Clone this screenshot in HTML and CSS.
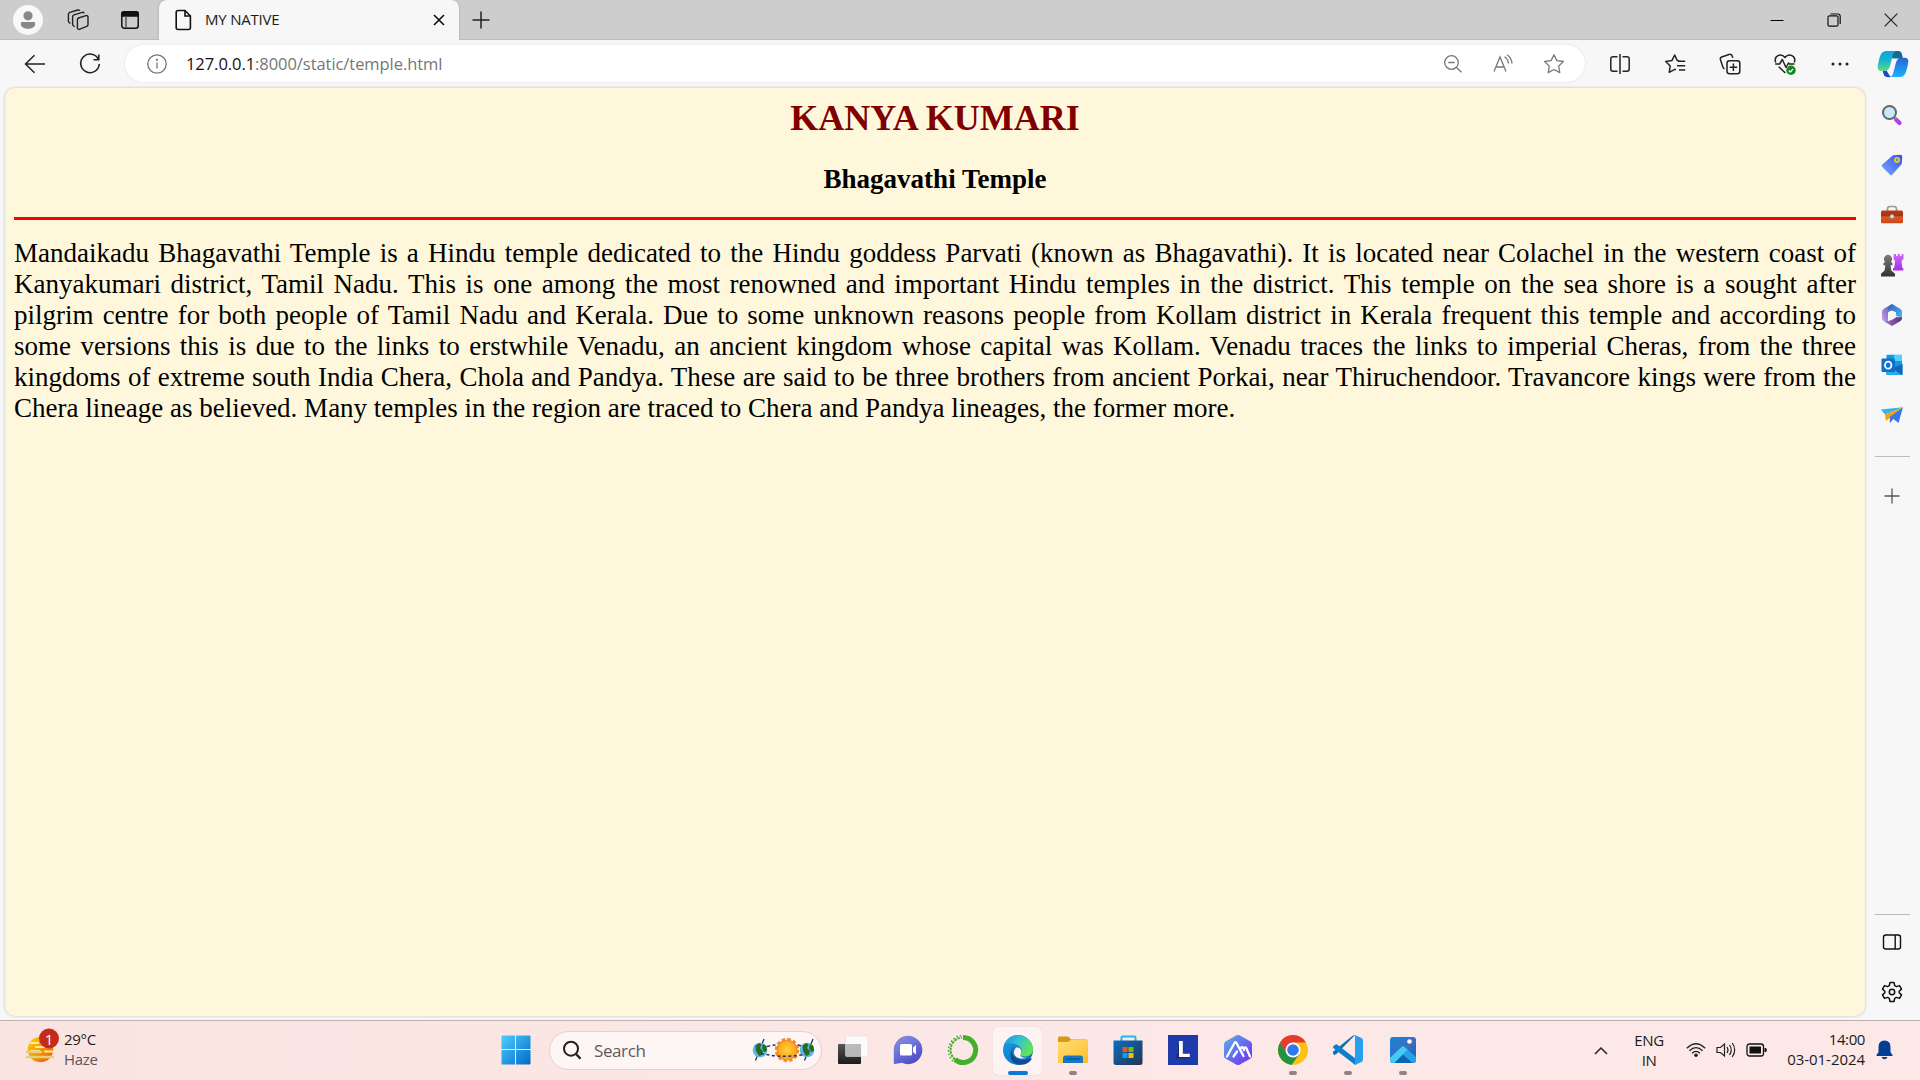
FILE: index.html
```html
<!DOCTYPE html>
<html lang="en">
<head>
<meta charset="utf-8">
<title>MY NATIVE</title>
<link rel="stylesheet" href="styles.css">
</head>
<body>
<svg class="defs" width="0" height="0">
  <defs>
    <linearGradient id="teal" x1="0" y1="0" x2="0" y2="1"><stop offset="0" stop-color="#0ea5e0"/><stop offset=".45" stop-color="#14b3d0"/><stop offset="1" stop-color="#5bdc86"/></linearGradient>
    <linearGradient id="blue" x1="0" y1="0" x2="0" y2="1"><stop offset="0" stop-color="#2a62d8"/><stop offset="1" stop-color="#19b4fb"/></linearGradient>
    <linearGradient id="tag" x1="0" y1="1" x2="1" y2="0"><stop offset="0" stop-color="#74aefc"/><stop offset="1" stop-color="#3c4df0"/></linearGradient>
    <linearGradient id="win" gradientUnits="userSpaceOnUse" x1="0" y1="0" x2="30" y2="30"><stop offset="0" stop-color="#4fd0ff"/><stop offset="1" stop-color="#0067c8"/></linearGradient>
    <linearGradient id="sun" x1="0" y1="0" x2="1" y2="1"><stop offset="0" stop-color="#ffd400"/><stop offset="1" stop-color="#e65a0c"/></linearGradient>
    <linearGradient id="dark" x1="0" y1="0" x2="0" y2="1"><stop offset="0" stop-color="#555"/><stop offset="1" stop-color="#1c1c1c"/></linearGradient>
    <linearGradient id="pawn" x1="0" y1="0" x2="0" y2="1"><stop offset="0" stop-color="#7c7c7c"/><stop offset="1" stop-color="#333"/></linearGradient>
    <linearGradient id="chat" x1="0" y1="0" x2=".6" y2="1"><stop offset="0" stop-color="#9a86cc"/><stop offset=".35" stop-color="#7480dc"/><stop offset="1" stop-color="#4f4cc4"/></linearGradient>
    <linearGradient id="edgeTop" x1="0" y1="0" x2="1" y2=".5"><stop offset="0" stop-color="#1593d8"/><stop offset=".5" stop-color="#34c1d6"/><stop offset="1" stop-color="#62e552"/></linearGradient>
    <linearGradient id="edgeLeft" x1="0" y1="0" x2="1" y2="1"><stop offset="0" stop-color="#1aa0e4"/><stop offset="1" stop-color="#0c64c0"/></linearGradient>
    <linearGradient id="folder" x1="0" y1="0" x2="1" y2="1"><stop offset="0" stop-color="#ffdf7a"/><stop offset="1" stop-color="#fdbd25"/></linearGradient>
    <linearGradient id="store" x1="0" y1="0" x2="1" y2="1"><stop offset="0" stop-color="#0a6fc0"/><stop offset="1" stop-color="#243455"/></linearGradient>
    <linearGradient id="hex" x1="0" y1="0" x2="1" y2="1"><stop offset="0" stop-color="#59b2ea"/><stop offset="1" stop-color="#7227f2"/></linearGradient>
    <linearGradient id="photo" x1="0" y1="0" x2="1" y2="1"><stop offset="0" stop-color="#1685d8"/><stop offset=".55" stop-color="#3f6cc0"/><stop offset="1" stop-color="#0c62b4"/></linearGradient>
    <linearGradient id="rook" x1="0" y1="0" x2="0" y2="1"><stop offset="0" stop-color="#cf6cf2"/><stop offset="1" stop-color="#a32bf0"/></linearGradient>
    <linearGradient id="brick" x1="0" y1="0" x2="0" y2="1"><stop offset="0" stop-color="#b63c14"/><stop offset=".4" stop-color="#a6330f"/><stop offset=".5" stop-color="#e2592a"/><stop offset="1" stop-color="#c94415"/></linearGradient>
    <linearGradient id="loopA" x1="0" y1="1" x2="1" y2="0"><stop offset="0" stop-color="#d0a0ec"/><stop offset="1" stop-color="#4c50b0"/></linearGradient>
    <linearGradient id="loopB" x1="0" y1="0" x2="1" y2="1"><stop offset="0" stop-color="#2c60bd"/><stop offset="1" stop-color="#4fbdf2"/></linearGradient>
    <linearGradient id="loopC" x1="0" y1="0" x2="1" y2="0"><stop offset="0" stop-color="#a678d4"/><stop offset="1" stop-color="#583070"/></linearGradient>
    <radialGradient id="disc"><stop offset="0" stop-color="#ffd13c"/><stop offset="1" stop-color="#f9a81c"/></radialGradient>
  </defs>
</svg>

<header class="tabs">
  <div class="slot profile"><svg width="30" height="30" viewBox="0 0 30 30"><circle cx="15" cy="15" r="15" fill="#f8f8f8"/><circle cx="15" cy="10.800" r="4.600" fill="#888"/><path d="M8 17h14v2.500c0 2.600-3 4.200-7 4.200s-7-1.600-7-4.200z" fill="#888"/></svg></div>
  <div class="slot spaces"><svg width="22" height="22" viewBox="0 0 22 22" fill="none" stroke="#222" stroke-width="1.400"><path d="M11.500 9l7.500-2.400c1.200-.3 2 .4 2 1.500v7.300c0 1-.5 1.700-1.300 2l-7.400 2.900c-1.100.3-1.900-.4-1.900-1.500v-7.600c0-1 .3-1.800 1.100-2.200z"/><path d="M7.700 17.700l-1.200-.9c-.6-.4-.9-.9-.9-1.700V7.800c0-1 .5-1.600 1.400-1.900l8.200-2.500c.8-.2 1.600 0 1.900.9"/><path d="M3.400 14.500l-1.200-1c-.6-.4-.8-.9-.8-1.600V5.200c0-.9.5-1.600 1.400-1.900L10.700 1c.9-.2 1.700.1 2 .8"/></svg></div>
  <div class="slot actions"><svg width="20" height="20" viewBox="0 0 20 20" fill="none" stroke="#111" stroke-width="1.500"><rect x="1.800" y="1.800" width="16.400" height="16.400" rx="2.500"/><path d="M1.800 6V4q0-2.200 2.200-2.200h12q2.200 0 2.200 2.200v2z" fill="#111"/><path d="M6 6v12" stroke="#555"/></svg></div>
  <div class="tab">
    <svg class="doc" width="17" height="22" viewBox="0 0 17 22" fill="none" stroke="#111" stroke-width="1.600"><path d="M3.200 1.500H10L15.400 7v11.500q0 2-2 2H3.200q-2 0-2-2v-15q0-2 2-2z"/><path d="M10 1.500V7h5.400"/></svg>
    <span class="tab-title">MY NATIVE</span>
    <svg class="tab-close" width="12" height="12" viewBox="0 0 12 12" stroke="#111" stroke-width="1.600"><path d="M1 1l10 10M11 1L1 11"/></svg>
  </div>
  <svg class="new-tab" width="18" height="18" viewBox="0 0 18 18" stroke="#222" stroke-width="1.500"><path d="M9 .5v17M.5 9h17"/></svg>
  <div class="controls">
    <svg width="14" height="14" viewBox="0 0 14 14" stroke="#000"><path d="M.5 7.500h13"/></svg>
    <svg width="14" height="14" viewBox="0 0 14 14" fill="none" stroke="#111" stroke-width="1.200"><rect x="1" y="2.800" width="10" height="10.400" rx="1.500"/><path d="M3.500 1h7.300q2.400 0 2.400 2.400V11"/></svg>
    <svg width="14" height="14" viewBox="0 0 14 14" stroke="#222" stroke-width="1.200"><path d="M.7.7l12.600 12.600M13.300.7L.7 13.300"/></svg>
  </div>
</header>

<nav class="toolbar">
  <div class="nav-btn"><svg width="22" height="20" viewBox="0 0 22 20" fill="none" stroke="#222" stroke-width="1.500"><path d="M21 10H1.500M10.500 1.300L1.500 10l9 8.700"/></svg></div>
  <div class="nav-btn"><svg width="22" height="22" viewBox="0 0 22 22" fill="none" stroke="#222" stroke-width="1.600"><path d="M19.500 6.500A9.300 9.300 0 1 0 20.300 11"/><path d="M19.800 1.500v5.200h-5.300"/></svg></div>
  <div class="address">
    <svg class="info" width="20" height="20" viewBox="0 0 20 20" fill="none" stroke="#777" stroke-width="1.300"><circle cx="10" cy="10" r="9.200"/><path d="M10 8.600v6"/><circle cx="10" cy="5.800" r=".5"/></svg>
    <span class="url"><b>127.0.0.1</b>:8000/static/temple.html</span>
    <div class="address-tools">
      <svg width="20" height="20" viewBox="0 0 20 20" fill="none" stroke="#777" stroke-width="1.300"><circle cx="8.500" cy="8.500" r="6.800"/><path d="M5.300 8.500h6.400M13.500 13.500l5 4.800"/></svg>
      <svg width="20" height="20" viewBox="0 0 20 20" fill="none" stroke="#777" stroke-width="1.300"><path d="M1 17.500L7 3l6 14.500M3 13h8M11.500 2.800q3.500 2.200 4 6.700M14 .8q4.500 3 5 8.700"/></svg>
      <svg width="22" height="22" viewBox="0 0 22 22" fill="none" stroke="#777" stroke-width="1.300" stroke-linejoin="round"><path d="M11 1.700l2.900 5.900 6.500.9-4.700 4.600 1.100 6.500L11 16.500l-5.800 3.100 1.100-6.500L1.600 8.500l6.500-.9z"/></svg>
    </div>
  </div>
  <div class="tools">
    <svg width="22" height="22" viewBox="0 0 22 22" fill="none" stroke="#222" stroke-width="1.500"><path d="M8.500 3.700H4q-2.200 0-2.200 2.200v10.200q0 2.200 2.200 2.200h4.500M13.500 3.700H18q2.200 0 2.200 2.200v10.200q0 2.200-2.200 2.200h-4.500M11 1v20"/></svg>
    <svg width="22" height="22" viewBox="0 0 22 22" fill="none" stroke="#222" stroke-width="1.500" stroke-linejoin="round"><path d="M15 7.800l-1.700-.2L10.700 2 7.900 7.600l-6.200.9 4.500 4.500-1 6.300 5.600-3 1.100.5M14 8.300h7.200M13 12.700h8.200M15 17h6.200"/></svg>
    <svg width="22" height="22" viewBox="0 0 22 22" fill="none" stroke="#222" stroke-width="1.500"><rect x="8" y="7.700" width="12.800" height="13" rx="2.500"/><path d="M14.400 10.500v7.500M10.700 14.200h7.500M5.500 15.800q-1.200-.4-1.600-1.700L1.400 6.500Q.9 4.600 2.700 4L10 1.500q2.300-.6 3.200 1.400l.6 1.800"/></svg>
    <svg width="22" height="22" viewBox="0 0 22 22" fill="none" stroke="#222" stroke-width="1.500" stroke-linejoin="round"><path d="M1.700 9.500Q0 4.800 4 2.600q4-1.600 7 1.800 3-3.400 7-1.800 4 2.200 2.300 6.900M1.200 11h4.500l2.600-4.500 3.700 8 2.500-4.500 1 1h5M4.800 13.800l6.500 6.200"/><circle cx="17" cy="17.300" r="4.700" fill="#118a18" stroke="none"/><path d="M14.800 17.500l1.500 1.500 2.800-3" stroke="#fff" stroke-width="1.200"/></svg>
    <svg width="22" height="22" viewBox="0 0 22 22" fill="#222"><circle cx="4" cy="11" r="1.500"/><circle cx="11" cy="11" r="1.500"/><circle cx="18" cy="11" r="1.500"/></svg>
  </div>
  <div class="copilot"><svg width="32" height="28" viewBox="0 0 32 28"><path d="M15 1h6.500q2.600 0 3.400 3l1.100 4.500h-9L14 8z" fill="#136b92"/><path d="M9.500 20.500L13.500 27q-5.500 1-7-3L5.500 20z" fill="#1f46d2"/><path d="M9 1h10.300q-2.600.7-3.300 3.300L13 16q-1.400 5-5.500 5H4.200Q.6 21 .7 16.800q.3-3.200 2-9.500Q4.500 1 9 1z" fill="url(#teal)"/><path d="M23 27H12.700q2.600-.7 3.300-3.300L19 12.500q1.400-4.800 5.500-4.800h3.300q3.600 0 3.500 4-.3 3.200-2 9.200Q27.500 27 23 27z" fill="url(#blue)"/></svg></div>
</nav>

<div class="middle">
  <main class="page">
    <h1>KANYA KUMARI</h1>
    <h2>Bhagavathi Temple</h2>
    <hr>
    <p>Mandaikadu Bhagavathi Temple is a Hindu temple dedicated to the Hindu goddess Parvati (known as Bhagavathi). It is located near Colachel in the western coast of Kanyakumari district, Tamil Nadu. This is one among the most renowned and important Hindu temples in the district. This temple on the sea shore is a sought after pilgrim centre for both people of Tamil Nadu and Kerala. Due to some unknown reasons people from Kollam district in Kerala frequent this temple and according to some versions this is due to the links to erstwhile Venadu, an ancient kingdom whose capital was Kollam. Venadu traces the links to imperial Cheras, from the three kingdoms of extreme south India Chera, Chola and Pandya. These are said to be three brothers from ancient Porkai, near Thiruchendoor. Travancore kings were from the Chera lineage as believed. Many temples in the region are traced to Chera and Pandya lineages, the former more.</p>
  </main>
  <aside class="sidebar">
    <div class="side-btn"><svg width="22" height="22" viewBox="0 0 22 22"><path d="M15 15.500l3.500 3.500" stroke="#b53cf0" stroke-width="4.200" stroke-linecap="round"/><path d="M12.500 12.500l3 3" stroke="#888" stroke-width="2"/><circle cx="8.500" cy="8.500" r="6.500" fill="#c8e8fb" stroke="#666" stroke-width="2"/></svg></div>
    <div class="side-btn"><svg width="22" height="22" viewBox="0 0 22 22"><path d="M12 1.200l7.300-.4q2 0 2 2l-.5 7.200-9.600 10.700q-1 1-2.200 0L1.300 13q-1.300-1.200 0-2.500z" fill="url(#tag)"/><circle cx="16" cy="6" r="2.200" fill="#8f8" fill-opacity=".3" stroke="#f6c829" stroke-width="1.600"/></svg></div>
    <div class="side-btn"><svg width="24" height="20" viewBox="0 0 24 20"><path d="M7.500 6V4q0-2.500 2.500-2.500h4q2.500 0 2.500 2.500v2" fill="none" stroke="#999" stroke-width="1.700"/><rect x="1" y="5.500" width="22" height="12.800" rx="1.500" fill="url(#brick)"/><circle cx="12" cy="11.500" r="2.200" fill="#ddd" stroke="#777" stroke-width=".7"/></svg></div>
    <div class="side-btn"><svg width="24" height="24" viewBox="0 0 24 24"><path d="M13.800 1h2.200v2h1.700V1h2.300v2h1.500V1h2v5l-2 2 .8 7h1v2.500H13V15h1.200l.9-7-1.600-2z" fill="url(#rook)"/><path d="M8 1.800a4.200 4.200 0 0 1 3 7l1.500 1.700v1.800h-2l.8 5.200 3.700 3.200v2.800H1v-2.800l3.600-3.200.8-5.200h-2v-1.800L5 8.800a4.200 4.200 0 0 1 3-7z" fill="url(#pawn)"/></svg></div>
    <div class="side-btn"><svg width="24" height="24" viewBox="0 0 24 24"><path d="M12 1l-8.500 5Q2 7 2 9v6q0 2 1.500 3L8 20.300V9.500L13.500 6z" fill="url(#loopA)"/><path d="M12 1l8.500 5Q22 7 22 9v6.500l-6-3V9.300L8 6.500V4z" fill="url(#loopB)"/><path d="M22 14.500v.5q0 2-1.500 3L12 23l-8-4.700q4 .7 8-1.800l4-2.500z" fill="url(#loopC)"/><path d="M12 7.500l4 2.300v4.500L12 16.700l-4-2.400V9.800z" fill="#f7f7f7"/></svg></div>
    <div class="side-btn"><svg width="22" height="22" viewBox="0 0 22 22"><rect x="5.500" y=".8" width="15.500" height="13" rx="1" fill="#1597dd"/><path d="M13 1h8v6h-8z" fill="#4bd3fb"/><path d="M5 10l8 5 8.500-5v10q0 1-1 1H6q-1 0-1-1z" fill="#2aa9ec"/><path d="M21.500 10v10q0 1-1 1L11 14z" fill="#1367b6"/><rect x=".5" y="4.500" width="13.500" height="13.500" rx="1" fill="#0b72cc"/><ellipse cx="7.200" cy="11.200" rx="3.200" ry="3.500" fill="none" stroke="#fff" stroke-width="1.800"/></svg></div>
    <div class="side-btn"><svg width="24" height="20" viewBox="0 0 24 20"><path d="M.8 4.500L23 2.200 5 9.500z" fill="#31b4ee"/><path d="M23 2.200L5 9.500l1 6.500 5-4.200z" fill="#f0a014"/><path d="M23 2.200L9.800 12v6.300l3.500-4.200 5.200 3.800z" fill="#3478ea"/></svg></div>
    <div class="divider"></div>
    <div class="side-btn add"><svg width="16" height="16" viewBox="0 0 16 16" stroke="#555" stroke-width="1.300"><path d="M8 .5v15M.5 8h15"/></svg></div>
    <div class="divider lower"></div>
    <div class="side-btn panel"><svg width="20" height="18" viewBox="0 0 20 18" fill="none" stroke="#111" stroke-width="1.400"><rect x="1.500" y="2" width="17" height="14" rx="2.200"/><path d="M13.200 2v14"/></svg></div>
    <div class="side-btn"><svg width="22" height="22" viewBox="0 0 22 22" fill="none" stroke="#111" stroke-width="1.500" stroke-linejoin="round"><circle cx="11" cy="11" r="2.700"/><path d="M9 1.500h4l.7 3.100 1.800 1 3-1 2 3.500-2.300 2.100v1.600l2.300 2.100-2 3.500-3-1-1.800 1-.7 3.100H9l-.7-3.100-1.800-1-3 1-2-3.500 2.300-2.100v-1.600L1.500 8.100l2-3.500 3 1 1.800-1z"/></svg></div>
  </aside>
</div>

<footer class="taskbar">
  <div class="widgets">
    <svg width="36" height="36" viewBox="0 0 36 36"><circle cx="15.500" cy="21.500" r="12.700" fill="url(#sun)"/><path d="M6 15h7M11 19h16M6 23h8M20 23.500h9" stroke="#ffe9a0" stroke-width="2" stroke-linecap="round"/><path d="M2 24h14M2 29h26" stroke="#e8cc80" stroke-width="2.400" stroke-linecap="round"/><circle cx="24" cy="10.500" r="10" fill="#c42b1c"/></svg>
    <span class="badge">1</span>
    <div class="weather"><span>29°C</span><span class="muted">Haze</span></div>
  </div>
  <div class="app start"><svg width="30" height="30" viewBox="0 0 30 30" fill="url(#win)"><path d="M1.500.5H14V14H.5V1.500q0-1 1-1zM15 .5h13.500q1 0 1 1V14H15zM.5 15H14v14.500H1.500q-1 0-1-1zM15 15h14.500v13.500q0 1-1 1H15z"/></svg></div>
  <div class="search">
    <svg width="20" height="20" viewBox="0 0 20 20" fill="none" stroke="#222" stroke-width="2"><circle cx="9" cy="8.700" r="7"/><path d="M14 14l4.500 4.800" stroke-width="2.400"/></svg>
    <span>Search</span>
    <svg class="orbit" width="64" height="28" viewBox="0 0 64 28"><path d="M3.500 24.500L12 3M52.500 24.500L61 3" stroke="#263060" stroke-width="1.300"/><circle cx="8" cy="14" r="7.300" fill="#5db4ea"/><path d="M3.500 9.500l4-2.500 2 2-1.500 3 3 3-1 4-3 1-3-5zM11 8l3.500 2 .5 5-3 1-2-4z" fill="#246c1e"/><circle cx="55" cy="14" r="7.300" fill="#5db4ea"/><path d="M50.500 9.500l4-2.500 2 2-1.500 3 3 3-1 4-3 1-3-5zM58 8l3.500 2 .5 5-3 1-2-4z" fill="#246c1e"/><circle cx="35" cy="14" r="10.500" fill="#f58a2c"/><circle cx="35" cy="14" r="11" fill="none" stroke="#f58a2c" stroke-width="2.500" stroke-dasharray="3.500 2.260"/><circle cx="35" cy="14" r="9.200" fill="url(#disc)"/><path d="M15 10.500q5-1.500 9-1.500M46 9l4 1M9 17.500q22 5 42 1" fill="none" stroke="#263060" stroke-width="1.500" stroke-dasharray="3 2.500"/></svg>
  </div>
  <div class="app"><svg width="32" height="30" viewBox="0 0 32 30"><rect x="1" y="9" width="23" height="20" rx="1" fill="url(#dark)"/><rect x="8.500" y="1" width="22.500" height="20.500" rx="1" fill="#fff" fill-opacity=".78" stroke="#ddd" stroke-width=".5"/><path d="M9 9h15v12H9z" fill="#aaa" fill-opacity=".65"/></svg></div>
  <div class="app"><svg width="30" height="30" viewBox="0 0 30 30"><path d="M15 .8a14.200 14.200 0 1 1-6 27L1.500 29q-1 0-.7-1V15A14.200 14.200 0 0 1 15 .8z" fill="url(#chat)"/><rect x="7" y="9" width="12" height="11.500" rx="1.500" fill="#fff"/><path d="M20 12.500l3-2.500v9.500l-3-2.500z" fill="#fff"/></svg></div>
  <div class="app"><svg width="32" height="32" viewBox="0 0 32 32" fill="none" stroke="#43b02a" stroke-width="5"><path d="M16 3.500a12.500 12.500 0 1 1-8 22"/><path d="M8 25.500A12.500 12.500 0 0 1 15 3.500" stroke-width="2" stroke-dasharray="2.500 1"/><path d="M6 27A15 15 0 0 1 14 1.500" stroke-width="1.700" stroke-dasharray="1.500 2"/></svg></div>
  <div class="app active"><svg width="32" height="32" viewBox="0 0 32 32"><circle cx="16" cy="16" r="15" fill="url(#edgeLeft)"/><path d="M2 11A15 15 0 0 1 31 15c0 5-3.500 7.500-8 7.500q-4 0-5-1.700c2.500-2.500 2.300-6-.3-8.200C14 9 5.500 8 2 11z" fill="url(#edgeTop)"/><path d="M13 12.500c-5 4-3 10 3 12.500 5 2 9 1 12.800-.8 1-.4 1 .5.600 1.200C24 34 8 32 8.500 21q.3-6.500 4.500-8.500z" fill="#0f4c94"/><path d="M13.500 14c4-2 7.500 2.500 5 6.300-1 2 2 4.200 7 3.200-6 2.500-14.500.5-13.500-6z" fill="#fdf2f1"/></svg><i></i></div>
  <div class="app open"><svg width="32" height="30" viewBox="0 0 32 30"><path d="M1 3q0-1.500 1.500-1.500h8q1 0 2 1L14 4.500h15.500q1.500 0 1.500 1.500v4H1z" fill="#d99a10"/><path d="M1 7h10l3-2h17v23H1z" fill="url(#folder)"/><path d="M6 28v-5q0-2.500 2.500-2.500h15Q26 20.500 26 23v5z" fill="#1478c8"/><path d="M9.500 24h13" stroke="#0a4b8c" stroke-width="1.200"/></svg><i></i></div>
  <div class="app"><svg width="32" height="32" viewBox="0 0 32 32"><path d="M9.500 7V3.500q0-1 1-1h12q1 0 1 1V7" fill="none" stroke="#25b4ee" stroke-width="2"/><path d="M1.500 6.500h29v22q0 2.500-2.500 2.500H4q-2.500 0-2.500-2.500z" fill="url(#store)"/><path d="M10.500 13h5v5h-5z" fill="#f25022"/><path d="M16.500 13h5v5h-5z" fill="#7fba00"/><path d="M10.500 19h5v5h-5z" fill="#00a4ef"/><path d="M16.500 19h5v5h-5z" fill="#ffb900"/></svg></div>
  <div class="app"><svg width="30" height="30" viewBox="0 0 30 30"><path d="M0 0h30v30H0z" fill="#1e3aab"/><path d="M8 23.500l3-3V22h10v1.500z" fill="#163060"/><path d="M8.500 23L11 9v13z" fill="#163060"/><path d="M11 6h3.800v12.700h7V22H11z" fill="#fff"/></svg></div>
  <div class="app"><svg width="32" height="32" viewBox="0 0 32 32"><path d="M14.500 1.300q1.500-.8 3 0l11 6.200q1.500 1 1.500 2.500v12q0 1.500-1.500 2.500l-11 6.200q-1.500.8-3 0l-11-6.200Q2 23.500 2 22V10q0-1.500 1.500-2.500z" fill="url(#hex)"/><path d="M5 22.500l7.500-13.500q1-1.800 2 0l7 13M11.500 22.500l3.500-5M19 14q1-2 2 0l1 2M22.500 14q1-1.500 2 .5l3.500 8" fill="none" stroke="#fff" stroke-width="2.300" stroke-linecap="round"/></svg></div>
  <div class="app open"><svg width="32" height="32" viewBox="0 0 32 32"><circle cx="16" cy="16" r="15" fill="#fbc116"/><path d="M3 8.500a15 15 0 0 0 11.500 22.400L22.500 20 10 19.500z" fill="#229342"/><path d="M3 8.500A15 15 0 0 1 29 8.500H16v7.500L9.500 19.500z" fill="#e33b2e"/><circle cx="16" cy="16" r="7.500" fill="#fff"/><circle cx="16" cy="16" r="5.800" fill="#3178ee"/></svg><i></i></div>
  <div class="app open"><svg width="32" height="32" viewBox="0 0 32 32"><path d="M23 1L5 19.500l-3 1.800-1-2v-1.500L19 3q2-2 4-2z" fill="#0a70b8"/><path d="M1 12.500l2.500-2q1-.5 2 .3L24 25v6q-1.500-.3-3-1.700L1.200 14z" fill="#0e7fcb"/><path d="M23 1l6.500 3q1.500.7 1.500 2.500v19q0 1.800-1.500 2.500L23 31z" fill="#26a0ec"/></svg><i></i></div>
  <div class="app open"><svg width="28" height="28" viewBox="0 0 28 28"><rect x="1" y="1" width="26" height="26" rx="3" fill="url(#photo)"/><path d="M1 22L12.500 11q1.500-1.300 3 0L27 21v3q0 3-3 3H4q-3 0-3-3z" fill="#25a2e8"/><path d="M1 22L12.500 11q1.500-1.300 3 0l3 2.800L5 27H4q-3 0-3-3z" fill="#45c9f5"/><path d="M14 18.500L5.500 27h18z" fill="#0f65b0"/><circle cx="20.500" cy="5.500" r="2.300" fill="#fff"/></svg><i></i></div>
  <div class="tray">
    <svg class="chevron" width="14" height="9" viewBox="0 0 14 9" fill="none" stroke="#222" stroke-width="1.500"><path d="M1 8l6-6 6 6"/></svg>
    <div class="lang"><span>ENG</span><span>IN</span></div>
    <svg class="wifi" width="20" height="16" viewBox="0 0 20 16" fill="none" stroke="#222" stroke-width="1.300"><path d="M.8 6.200q9.200-9 18.400 0M3.400 8.800q6.600-6.300 13.200 0M6 11.300q4-3.800 8 0"/><circle cx="10" cy="13.300" r="1.800" fill="#222" stroke="none"/></svg>
    <svg class="sound" width="21" height="18" viewBox="0 0 21 18" fill="none" stroke="#222" stroke-width="1.200"><path d="M1 6.500h3.500L8.500 3v12l-4-3.500H1zM11 6q2 3 0 6M13.500 4q3.500 5 0 10M16.200 2q5 7 0 14"/></svg>
    <svg class="battery" width="21" height="14" viewBox="0 0 21 14"><rect x="1" y="1" width="16.500" height="12" rx="2.500" fill="none" stroke="#111" stroke-width="1.300"/><path d="M3.500 3.500h11.500v7H3.500zM18.500 5h1.200l1 1v2l-1 1h-1.200z" fill="#111"/></svg>
    <div class="clock"><span class="time">14:00</span><span>03-01-2024</span></div>
    <svg class="bell" width="17" height="20" viewBox="0 0 17 20" fill="#003f93"><path d="M8.500.5q6 0 6 6.500v5l2 3v1H.5v-1l2-3V7q0-6.500 6-6.500zM5.500 17h6q-1 2.300-3 2.300t-3-2.300z"/></svg>
  </div>
</footer>
</body>
</html>
```
FILE: styles.css
```css
* { box-sizing: border-box; }
body {
  margin: 0;
  width: 1920px;
  height: 1080px;
  overflow: hidden;
  display: flex;
  flex-direction: column;
  background: #f7f7f7;
  font-family: "Open Sans", "Noto Sans", sans-serif;
  color: #1c1c1c;
}
svg { display: block; flex: none; overflow: visible; }
.defs { position: absolute; }

.tabs {
  display: flex;
  align-items: center;
  height: 40px;
  background: #cdcdcd;
  border-bottom: 1px solid #bdbdbd;
}
.slot { display: flex; justify-content: center; }
.profile { width: 56px; }
.spaces { width: 43px; }
.actions { width: 60px; padding-left: 2px; }
.tab {
  display: flex;
  align-items: center;
  width: 300px;
  height: 40px;
  margin-bottom: -1px;
  padding: 0 14px 0 16px;
  background: #f7f7f7;
  border-radius: 8px 8px 0 0;
  box-shadow: 0 0 3px rgba(0, 0, 0, .18);
  clip-path: inset(0 -4px 0 -4px);
}
.doc { margin-bottom: 1px; }
.tab-title { margin: 0 0 2px 13px; font-size: 15px; letter-spacing: -.2px; white-space: nowrap; }
.tab-close { margin-left: auto; }
.new-tab { margin-left: 13px; }
.controls { display: flex; gap: 43px; margin-left: auto; padding-right: 22px; }

.toolbar { display: flex; align-items: center; height: 47px; }
.nav-btn { display: flex; justify-content: center; width: 53px; }
.nav-btn:first-child { width: 63px; padding-left: 7px; }
.address {
  display: flex;
  align-items: center;
  width: 1460px;
  height: 37px;
  margin-left: 9px;
  padding: 0 20px 0 22px;
  background: #fff;
  border-radius: 19px;
  box-shadow: 0 0 3px rgba(0, 0, 0, .1);
}
.url { margin-left: 19px; font-size: 16.500px; letter-spacing: -.06px; color: #767676; white-space: nowrap; }
.url b { font-weight: 400; color: #111; }
.address-tools { display: flex; align-items: center; gap: 30px; margin-left: auto; }
.tools { display: flex; gap: 33px; margin-left: 24px; }
.copilot { margin-left: 26px; }

.middle { display: flex; height: 933px; }
.page {
  width: 1860px;
  height: 928px;
  margin: 1px 0 0 5px;
  padding: 0 9px;
  background: #fff7dc;
  border-radius: 10px;
  box-shadow: 0 0 3px rgba(0, 0, 0, .25);
  font-family: "Liberation Serif", serif;
  color: #000;
}
.page h1 { margin: 10px 0 0; font-size: 36px; line-height: 41px; text-align: center; color: #800000; }
.page h2 { margin: 25px 0 0; font-size: 27px; line-height: 31px; text-align: center; }
.page hr { height: 3px; margin: 22px 0 0; border: 0; background: #f00; }
.page p { margin: 18px 0 0; font-size: 27px; line-height: 31px; text-align: justify; }

.sidebar { width: 55px; }
.side-btn { display: flex; align-items: center; justify-content: center; height: 50px; padding-right: 1px; }
.side-btn:first-child { margin-top: 3px; }
.divider { width: 35px; height: 1px; margin: 16px 0 0 10px; background: #bbb; }
.add { margin-top: 14px; }
.divider.lower { margin-top: 393px; }
.panel { margin-top: 2px; }

.taskbar {
  display: flex;
  align-items: center;
  height: 60px;
  background: linear-gradient(90deg, #f9e4e2, #fce8e6 65%);
  border-top: 1px solid #bcb0b0;
}
.widgets { position: relative; display: flex; align-items: center; width: 488px; padding-left: 25px; font-size: 15px; line-height: 20px; }
.widgets > svg { margin-top: -10px; }
.badge { position: absolute; left: 44px; top: -4px; width: 10px; text-align: center; color: #fff; }
.weather { display: flex; flex-direction: column; margin: -4px 0 0 3px; letter-spacing: -.3px; }
.muted { color: #5c5555; }
.app { position: relative; display: flex; flex: none; align-items: center; justify-content: center; width: 55px; height: 48px; padding-bottom: 1px; }
.start { margin-right: 1px; }
.active::before { content: ""; position: absolute; inset: 0 3px; border-radius: 5px; background: #fdf3f2; box-shadow: 0 0 1px #c9b8b8; }
.active svg { position: relative; }
.app i { position: absolute; bottom: 0; width: 8px; height: 4px; border-radius: 2px; background: #8f8484; }
.active i { width: 20px; background: #0f78d4; }
.search {
  display: flex;
  align-items: center;
  width: 273px;
  height: 39px;
  margin: 0 3px 1px 5px;
  padding: 0 5px 0 12px;
  background: #fdf6f5;
  border: 1px solid #e4d0ce;
  border-radius: 20px;
  font-size: 17px;
  letter-spacing: -.4px;
  color: #5d5a5a;
}
.search span { margin-left: 12px; }
.orbit { margin-left: auto; }
.tray { display: flex; align-items: center; margin-left: auto; padding: 0 27px 1px 0; font-size: 15px; line-height: 20px; }
.lang { display: flex; flex-direction: column; align-items: center; width: 30px; margin: -1px 0 0 26px; letter-spacing: -.4px; }
.wifi { margin-left: 22px; }
.sound { margin-left: 10px; }
.battery { margin-left: 9px; }
.clock { display: flex; flex-direction: column; align-items: flex-end; width: 80px; margin: -3px 0 0 18px; letter-spacing: -.05px; white-space: nowrap; }
.time { letter-spacing: -.4px; }
.bell { margin-left: 11px; }
```
